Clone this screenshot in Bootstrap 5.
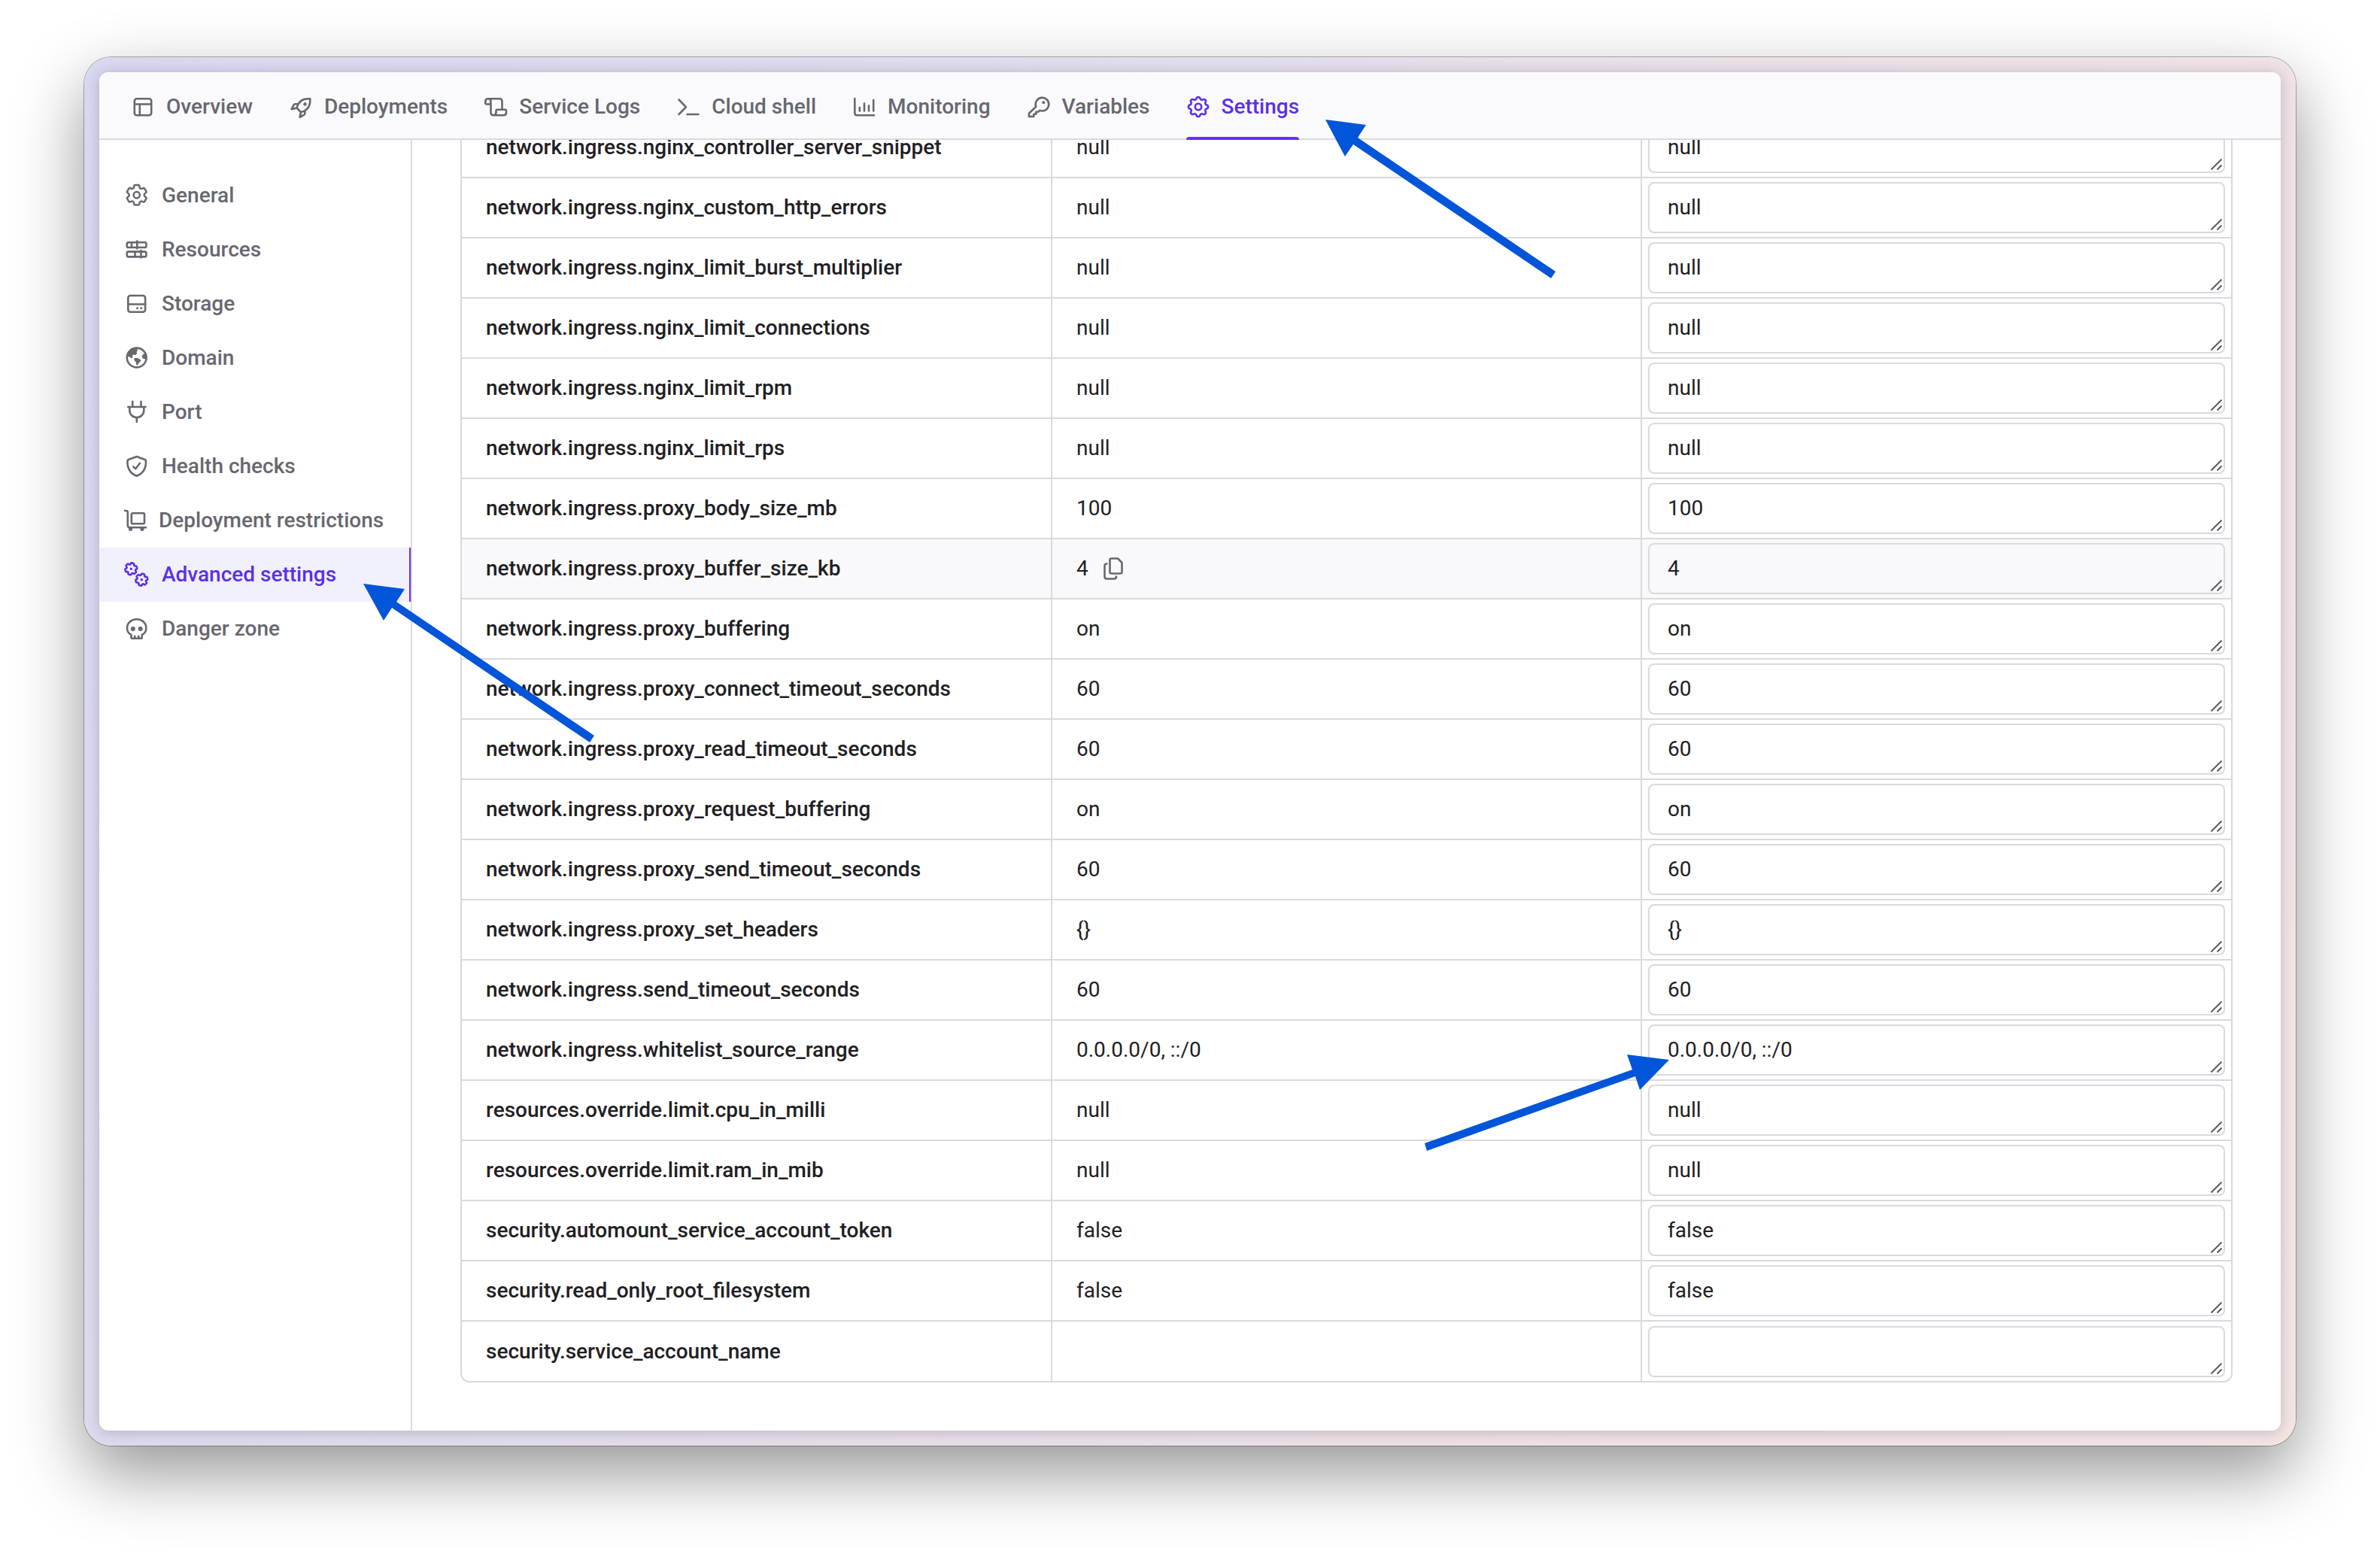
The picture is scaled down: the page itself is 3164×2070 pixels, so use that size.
<!DOCTYPE html>
<html lang="en">
<head>
<meta charset="utf-8">
<meta name="viewport" content="width=device-width, initial-scale=1">
<title>Service settings</title>
<link href="https://cdn.jsdelivr.net/npm/bootstrap@5.3.0/dist/css/bootstrap.min.css" rel="stylesheet">
<style>
  :root { --line: #d9d9df; --ink: #1f2023; --soft: #67676f; --brand: #5b30e6; }
  body { font-family: Roboto, "Liberation Sans", sans-serif; font-size: 28px; line-height: 40px; color: var(--ink); background: #fff; }
  .stage { height: 100vh; padding: 76px 112px 148px; }
  .frame { padding: 20px; border-radius: 36px; background: linear-gradient(115deg, #d8d8f1 0%, #dedbee 25%, #e7dfe9 50%, #efe2e6 75%, #f4e5e5 100%); box-shadow: 0 0 0 1px rgba(0,0,0,.3), 0 36px 90px rgba(0,0,0,.42); }
  .app-window { border-radius: 12px; box-shadow: 0 2px 18px rgba(40,30,60,.23); }
  .top-tabs { height: 90px; gap: 48px; padding-left: 42px; background: #fafafc; box-shadow: inset 0 -2px var(--line); }
  .top-tabs a { gap: 15px; padding-top: 2px; color: var(--soft); }
  .top-tabs a.active { color: var(--brand); }
  .top-tabs a.active::after { content: ""; position: absolute; left: 0; right: 0; bottom: 0; height: 4px; background: #642dff; border-radius: 4px 4px 0 0; }
  .side-menu { width: 416px; padding-top: 38px; border-right: 2px solid var(--line); }
  .side-menu a { height: 72px; gap: 17px; padding-left: 34px; color: var(--soft); white-space: nowrap; }
  .side-menu a.active { color: var(--brand); background: #f1f0fd; border-right: 2px solid #642dff; }
  .fw-500 { font-weight: 500; }
  .ico { width: 32px; height: 32px; flex: none; fill: none; stroke: currentColor; stroke-width: 2.6; stroke-linecap: round; stroke-linejoin: round; overflow: visible; }
  .ico .solid { fill: currentColor; stroke: none; }
  .ico-narrow { width: 28px; }
  .settings-pane { padding: 0 64px 64px; }
  .settings-box { border: 2px solid var(--line); border-radius: 12px; }
  .settings-table { table-layout: fixed; }
  .settings-table th, .settings-table td { height: 80px; padding: 0 32px; vertical-align: middle; border-bottom: 2px solid var(--line); }
  .settings-table th { font-weight: 500; }
  .settings-table td { border-left: 2px solid var(--line); }
  .settings-table td.edit-cell { padding: 0 8px; }
  .settings-table tr:last-child > * { border-bottom: 0; }
  .settings-table tr.hovered { background: #f9f9fb; }
  .edit-cell textarea { height: 68px; padding: 12px 24px; line-height: 40px; border: 2px solid var(--line); border-radius: 8px; background: transparent; color: var(--ink); resize: none; overflow: hidden; }
  .grip { position: absolute; right: 4px; bottom: 4px; width: 15px; height: 15px; stroke: #5c5c60; stroke-width: 2; pointer-events: none; }
  .copy-btn { margin-left: 20px; color: var(--soft); }
  .copy-btn .ico { width: 26px; }
  .pointers { pointer-events: none; fill: #0055d9; }
</style>
<script src="https://cdn.jsdelivr.net/npm/bootstrap@5.3.0/dist/js/bootstrap.bundle.min.js"></script>
</head>
<body>
<svg class="d-none" aria-hidden="true">
  <symbol id="cog6" viewBox="0 0 24 24"><path d="M9.594 3.94c.09-.542.56-.94 1.11-.94h2.593c.55 0 1.02.398 1.11.94l.213 1.281c.063.374.313.686.645.87.074.04.147.083.22.127.325.196.72.257 1.075.124l1.217-.456a1.125 1.125 0 0 1 1.37.49l1.296 2.247a1.125 1.125 0 0 1-.26 1.431l-1.003.827c-.293.241-.438.613-.43.992a7.723 7.723 0 0 1 0 .255c-.008.378.137.75.43.991l1.004.827c.424.35.534.955.26 1.43l-1.298 2.247a1.125 1.125 0 0 1-1.369.491l-1.217-.456c-.355-.133-.75-.072-1.076.124a6.47 6.47 0 0 1-.22.128c-.331.183-.581.495-.644.869l-.213 1.281c-.09.543-.56.94-1.11.94h-2.594c-.55 0-1.019-.398-1.11-.94l-.213-1.281c-.062-.374-.312-.686-.644-.87a6.52 6.52 0 0 1-.22-.127c-.325-.196-.72-.257-1.076-.124l-1.217.456a1.125 1.125 0 0 1-1.369-.49l-1.297-2.247a1.125 1.125 0 0 1 .26-1.431l1.004-.827c.292-.24.437-.613.43-.991a6.932 6.932 0 0 1 0-.255c.007-.38-.138-.751-.43-.992l-1.004-.827a1.125 1.125 0 0 1-.26-1.43l1.297-2.247a1.125 1.125 0 0 1 1.37-.491l1.216.456c.356.133.751.072 1.076-.124.072-.044.146-.086.22-.128.332-.183.582-.495.644-.869l.214-1.28Z"/></symbol>
</svg>

<div class="stage">
  <div class="frame h-100">
    <div class="app-window h-100 d-flex flex-column bg-white overflow-hidden">
      <nav class="top-tabs d-flex flex-shrink-0 fw-500" aria-label="Service">
        <a href="#" class="d-flex align-items-center text-decoration-none"><svg class="ico" viewBox="0 0 32 32"><rect x="4.8" y="5.3" width="22.4" height="22" rx="3"/><path d="M5 12.5h22M11.8 12.5v14.6"/></svg>Overview</a>
        <a href="#" class="d-flex align-items-center text-decoration-none"><svg class="ico" viewBox="0 0 32 32"><path d="M10.5 17.5C12.5 9.500 18 4.500 28.200 5.300C29 15.500 24 21 16 23Z"/><path d="M12.300 12.200H8.500Q7.400 12.200 6.800 13.200L3.600 19.200L10.500 17.500M21.300 21.200V25Q21.300 26.100 20.300 26.700L14.600 29.800L16 23"/><circle class="solid" cx="21.500" cy="12.500" r="2.200"/></svg>Deployments</a>
        <a href="#" class="d-flex align-items-center text-decoration-none"><svg class="ico" viewBox="0 0 32 32"><path d="M6 5.300H21Q24.500 5.300 24.500 9V19.500M9.500 12.500H3.800Q2.300 12.500 2.300 11V9Q2.300 5.300 6 5.300Q9.500 5.300 9.500 9V23.500Q9.500 27.200 13 27.200Q16.500 27.200 16.500 23.500V21.500Q16.500 19.800 18 19.800H28.500Q30 19.800 30 21.500V23.500Q30 27.200 26.500 27.200H13"/></svg>Service Logs</a>
        <a href="#" class="d-flex align-items-center text-decoration-none"><svg class="ico" viewBox="0 0 32 32"><path d="M3.500 6.500L13 16.300L3.500 26M14.500 26H29.500"/></svg>Cloud shell</a>
        <a href="#" class="d-flex align-items-center text-decoration-none"><svg class="ico" viewBox="0 0 32 32"><path d="M3.300 5V24Q3.300 27.200 6.500 27.200H29M9.800 17V21.500M16 11.500V21.500M22 14.500V21.500M28.200 7V21.500"/></svg>Monitoring</a>
        <a href="#" class="d-flex align-items-center text-decoration-none"><svg class="ico" viewBox="0 0 32 32"><path d="M12.300 15.800A8.800 8.800 0 1 1 17.200 20.800L15.300 22.700H12.300V25.800H9.300V29H3V24.800Z"/><circle class="solid" cx="22.300" cy="10.300" r="2"/></svg>Variables</a>
        <a href="#" class="active position-relative d-flex align-items-center text-decoration-none" aria-current="page"><svg class="ico" viewBox="0 0 32 32"><g transform="translate(-1.400 -1.400) scale(1.450)" stroke-width="1.800"><path d="M10.325 4.317c.426-1.756 2.924-1.756 3.350 0a1.724 1.724 0 0 0 2.573 1.066c1.543-.94 3.310.826 2.370 2.370a1.724 1.724 0 0 0 1.065 2.572c1.756.426 1.756 2.924 0 3.350a1.724 1.724 0 0 0-1.066 2.573c.94 1.543-.826 3.310-2.370 2.370a1.724 1.724 0 0 0-2.572 1.065c-.426 1.756-2.924 1.756-3.350 0a1.724 1.724 0 0 0-2.573-1.066c-1.543.94-3.310-.826-2.370-2.370a1.724 1.724 0 0 0-1.065-2.572c-1.756-.426-1.756-2.924 0-3.350a1.724 1.724 0 0 0 1.066-2.573c-.94-1.543.826-3.310 2.370-2.370 1 .608 2.296.07 2.572-1.065z"/><circle cx="12" cy="12" r="2.900"/></g></svg>Settings</a>
      </nav>

      <div class="d-flex flex-grow-1 overflow-hidden">
        <aside class="side-menu flex-shrink-0 fw-500">
          <a href="#" class="d-flex align-items-center text-decoration-none"><svg class="ico" viewBox="0 0 32 32"><g transform="translate(-2 -2.500) scale(1.480)" stroke-width="1.700"><use href="#cog6" width="24" height="24"/><circle cx="12" cy="12" r="2.800"/></g></svg>General</a>
          <a href="#" class="d-flex align-items-center text-decoration-none"><svg class="ico" viewBox="0 0 32 32"><rect x="2.800" y="6.200" width="25.600" height="6.800" rx="1.800"/><rect x="2.800" y="18.600" width="25.600" height="6.800" rx="1.800"/><path d="M9 6.500V12.500M16.300 4.500V14.500M13.500 19V25M21.500 17V26.500"/></svg>Resources</a>
          <a href="#" class="d-flex align-items-center text-decoration-none"><svg class="ico" viewBox="0 0 32 32"><rect x="4.300" y="5" width="22.800" height="21.800" rx="3"/><path d="M4.500 16.500H27"/><circle class="solid" cx="16.500" cy="21.700" r="1.500"/><circle class="solid" cx="21.800" cy="21.700" r="1.500"/></svg>Storage</a>
          <a href="#" class="d-flex align-items-center text-decoration-none"><svg class="ico" viewBox="0 0 32 32"><circle cx="15.700" cy="15.500" r="12.900"/><path class="solid" d="M3 13.500C3.500 7 9 2.800 15.500 2.600L17 5.500L15.500 8.200L16.300 10L14 12.300L11.500 11.300L9.500 13.200L11 15L9 16.200L5.500 14.200Z"/><path class="solid" d="M12.500 16H17L21.300 18.500Q21.300 20.500 19 22L16.800 25.500H15.300L14.800 21.500L12.300 18.800Z"/><path class="solid" d="M28.300 10.500L25 10.300L22.800 13.200L23.500 16.500L28.500 17.800Z"/></svg>Domain</a>
          <a href="#" class="d-flex align-items-center text-decoration-none"><svg class="ico" viewBox="0 0 32 32"><path d="M10.200 1.800V8M21.500 1.800V8M4.300 9H27.500M6.300 9.500V13.500A9.500 9.500 0 0 0 25.300 13.500V9.500M15.800 23.500V29"/></svg>Port</a>
          <a href="#" class="d-flex align-items-center text-decoration-none"><svg class="ico" viewBox="0 0 32 32"><path d="M15.700 3L26.500 7Q28 7.600 28 9.200C28.200 18 24 25.500 15.700 28.800C7.400 25.500 3.200 18 3.400 9.200Q3.400 7.600 4.900 7ZM11.300 16.300L14.300 19.300L20 11.800"/></svg>Health checks</a>
          <a href="#" class="d-flex align-items-center text-decoration-none"><svg class="ico ico-narrow" viewBox="0 0 28 32"><path d="M0 3H1.800Q3.800 3 3.800 5V22.500Q3.800 25.300 6.500 25.300H28"/><rect x="8.800" y="6.300" width="17.200" height="14" rx="1.500"/><circle class="solid" cx="7.500" cy="27.300" r="2.600"/><circle class="solid" cx="23" cy="27.300" r="2.600"/></svg>Deployment restrictions</a>
          <a href="#" class="active d-flex align-items-center text-decoration-none" aria-current="page"><svg class="ico" viewBox="0 0 32 32"><g stroke-width="2.900"><g transform="translate(8.300 8.300) rotate(15) scale(.88) translate(-12 -12)"><use href="#cog6" width="24" height="24"/><circle class="solid" cx="12" cy="12" r="1.900"/></g><g transform="translate(22.300 22.700) rotate(15) scale(.88) translate(-12 -12)"><use href="#cog6" width="24" height="24"/><circle class="solid" cx="12" cy="12" r="1.900"/></g></g></svg>Advanced settings</a>
          <a href="#" class="d-flex align-items-center text-decoration-none"><svg class="ico" viewBox="0 0 32 32"><path d="M8.500 24V27.200Q8.500 28.800 10 28.800H21.300Q22.800 28.800 22.800 27.200V24C26.300 22.200 28.300 19 28.300 15C28.300 8 22.700 3.200 15.700 3.200S3 8 3 15C3 19 5 22.200 8.500 24ZM13.200 28.500V25.800M18.200 28.500V25.800"/><circle class="solid" cx="10.800" cy="16" r="3"/><circle class="solid" cx="20.600" cy="16" r="3"/></svg>Danger zone</a>
        </aside>

        <main class="settings-pane flex-grow-1 d-flex flex-column justify-content-end overflow-hidden">
          <div class="settings-box flex-shrink-0 w-100 overflow-hidden">
            <table class="settings-table w-100">
              <tbody id="settingsRows"></tbody>
            </table>
          </div>
        </main>
      </div>
    </div>
  </div>
</div>

<svg class="pointers position-absolute top-0 start-0 w-100 h-100" aria-hidden="true">
  <path d="M1762 159L1816 166L1805 183L2068 361L2062 370L1799 192L1788 208Z"/>
  <path d="M483 776L538 783L527 800L790 978L784 987L521 808L510 825Z"/>
  <path d="M2219 1409L2163 1402L2170 1422L1894 1520L1897 1530L2174 1431L2180 1449Z"/>
</svg>

<script>
  const settings = [
    ["network.ingress.nginx_controller_server_snippet", "null"],
    ["network.ingress.nginx_custom_http_errors", "null"],
    ["network.ingress.nginx_limit_burst_multiplier", "null"],
    ["network.ingress.nginx_limit_connections", "null"],
    ["network.ingress.nginx_limit_rpm", "null"],
    ["network.ingress.nginx_limit_rps", "null"],
    ["network.ingress.proxy_body_size_mb", "100"],
    ["network.ingress.proxy_buffer_size_kb", "4"],
    ["network.ingress.proxy_buffering", "on"],
    ["network.ingress.proxy_connect_timeout_seconds", "60"],
    ["network.ingress.proxy_read_timeout_seconds", "60"],
    ["network.ingress.proxy_request_buffering", "on"],
    ["network.ingress.proxy_send_timeout_seconds", "60"],
    ["network.ingress.proxy_set_headers", "{}"],
    ["network.ingress.send_timeout_seconds", "60"],
    ["network.ingress.whitelist_source_range", "0.0.0.0/0, ::/0"],
    ["resources.override.limit.cpu_in_milli", "null"],
    ["resources.override.limit.ram_in_mib", "null"],
    ["security.automount_service_account_token", "false"],
    ["security.read_only_root_filesystem", "false"],
    ["security.service_account_name", ""]
  ];
  const hoveredKey = "network.ingress.proxy_buffer_size_kb";
  const copyButton = `<button type="button" class="copy-btn btn p-0 border-0 d-inline-flex" aria-label="Copy"><svg class="ico" viewBox="0 0 26 32"><path d="M10.500 2.500H19L24.500 8V20.500Q24.500 22.500 22.500 22.500H10.500Q8.500 22.500 8.500 20.500V4.500Q8.500 2.500 10.500 2.500ZM4.500 9.500Q1.500 9.500 1.500 12.500V26.500Q1.500 29.500 4.500 29.500H14Q17 29.500 17 26.500"/></svg></button>`;
  document.getElementById("settingsRows").innerHTML = settings.map(([key, value], i) => `
    <tr${key === hoveredKey ? ' class="hovered"' : ""}>
      <th scope="row"><label for="s${i}">${key}</label></th>
      <td><div class="d-flex align-items-center">${value}${key === hoveredKey ? copyButton : ""}</div></td>
      <td class="edit-cell"><div class="position-relative"><textarea id="s${i}" rows="1" class="d-block w-100">${value}</textarea><svg class="grip" viewBox="0 0 15 15"><path d="M.5 14.500L14.500 .5M8.500 14.500L14.500 8.500"/></svg></div></td>
    </tr>`).join("");
</script>
</body>
</html>
